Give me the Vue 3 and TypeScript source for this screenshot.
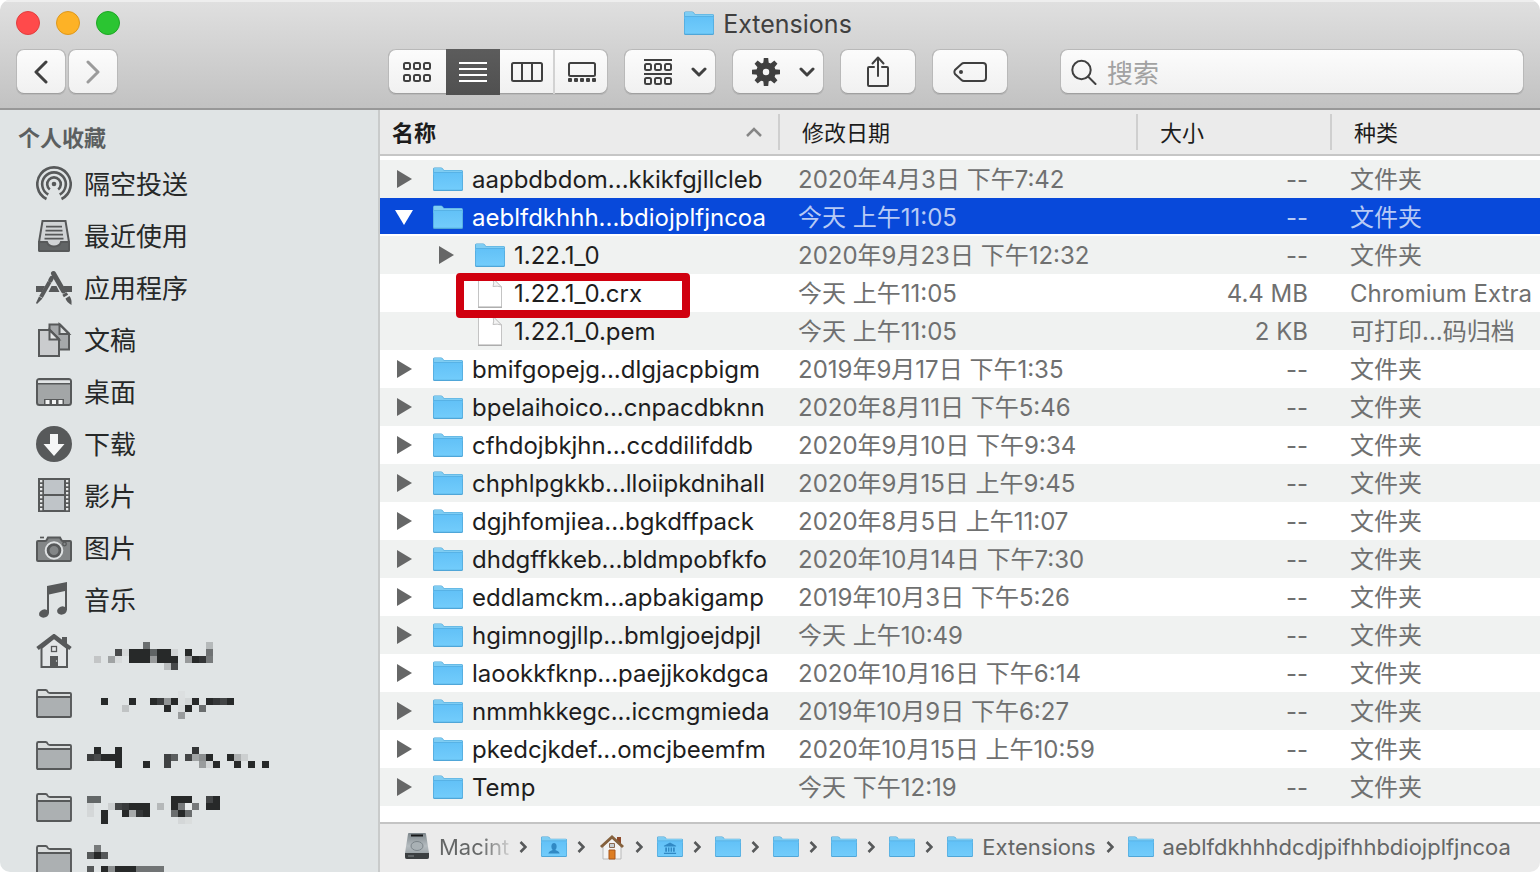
<script setup lang="ts">
import { ref } from 'vue'

type Kind = 'folder' | 'file'
interface Row {
  name: string
  date: string
  size: string
  type: string
  kind: Kind
  depth: number
  open?: boolean
  marked?: boolean
}
type Cell = [row: number, col: number, span: number, shade: string]
interface Place {
  icon: string
  label?: string
  top?: number
  cells?: Cell[]
}

const D = '#272929'

const places: Place[] = [
  { icon: 'airdrop', label: '隔空投送' },
  { icon: 'recents', label: '最近使用' },
  { icon: 'apps', label: '应用程序' },
  { icon: 'docs', label: '文稿' },
  { icon: 'desktop', label: '桌面' },
  { icon: 'downloads', label: '下载' },
  { icon: 'movies', label: '影片' },
  { icon: 'pictures', label: '图片' },
  { icon: 'music', label: '音乐' },
  {
    icon: 'home', top: 16, cells: [
      [0, 8, 1, '#6b6f70'], [0, 17, 1, '#b5b9ba'],
      [1, 4, 1, '#484a4b'], [1, 5, 1, '#d6d9da'], [1, 6, 3, D], [1, 9, 1, '#606465'], [1, 10, 2, D], [1, 12, 1, '#d0d3d4'], [1, 14, 1, D], [1, 17, 1, '#6f7273'],
      [2, 1, 1, '#c3c5c6'], [2, 3, 1, '#a0a3a4'], [2, 4, 1, '#d8dbdc'], [2, 6, 3, D], [2, 9, 1, '#97999a'], [2, 10, 3, D], [2, 14, 1, '#97999a'], [2, 15, 1, D], [2, 16, 1, '#333536'], [2, 17, 1, '#777a7b'],
      [3, 11, 1, '#babdbe'], [3, 12, 1, '#484a4b'],
    ],
  },
  {
    icon: 'folder', top: 13, cells: [
      [0, 13, 1, '#dcdfe0'],
      [1, 2, 1, D], [1, 6, 1, D], [1, 9, 1, D], [1, 10, 1, '#3b3d3e'], [1, 11, 1, '#909394'], [1, 12, 1, D], [1, 13, 1, '#dcdfe0'], [1, 14, 1, '#d3d6d7'], [1, 15, 1, D], [1, 17, 1, D], [1, 18, 1, '#353738'], [1, 19, 1, '#434546'], [1, 20, 1, D],
      [2, 5, 1, '#c0c3c4'], [2, 11, 1, D], [2, 13, 1, '#d9dcdd'], [2, 14, 1, D], [2, 16, 1, '#6a6d6e'],
      [3, 13, 1, '#999c9d'],
    ],
  },
  {
    icon: 'folder', top: 17, cells: [
      [0, 1, 1, D], [0, 4, 1, D], [0, 15, 1, '#333536'],
      [1, 0, 1, '#3b3d3e'], [1, 1, 1, '#484a4b'], [1, 2, 3, D], [1, 11, 1, '#3f4142'], [1, 12, 1, '#5b5e5f'], [1, 14, 1, '#434546'], [1, 15, 1, '#a0a3a4'], [1, 16, 1, '#8b8e8f'], [1, 17, 1, D], [1, 20, 1, D], [1, 21, 1, '#adb0b1'], [1, 22, 1, '#cccfd0'],
      [2, 4, 1, D], [2, 8, 1, D], [2, 11, 1, '#3f4142'], [2, 16, 1, '#999c9d'], [2, 17, 1, '#d3d6d7'], [2, 18, 1, D], [2, 21, 1, D], [2, 23, 1, D], [2, 25, 1, D],
    ],
  },
  {
    icon: 'folder', top: 14, cells: [
      [0, 0, 2, '#636768'], [0, 12, 1, D], [0, 13, 2, D], [0, 17, 1, '#434546'], [0, 18, 1, D],
      [1, 0, 1, '#d2d5d6'], [1, 3, 1, '#cccfd0'], [1, 4, 1, '#434546'], [1, 5, 1, '#383a3b'], [1, 6, 3, D], [1, 10, 1, '#b5b8b9'], [1, 12, 1, D], [1, 13, 1, '#777a7b'], [1, 14, 1, '#eaeded'], [1, 15, 1, '#777a7b'], [1, 17, 2, D],
      [2, 0, 1, '#d4d7d8'], [2, 2, 1, D], [2, 5, 1, D], [2, 6, 1, '#a7aaab'], [2, 7, 1, '#353738'], [2, 8, 1, D], [2, 12, 1, '#6a6d6e'], [2, 13, 1, D], [2, 14, 1, '#6a6d6e'],
      [3, 2, 1, D], [3, 13, 1, '#d4d7d8'], [3, 14, 1, '#dadddd'],
    ],
  },
  {
    icon: 'folder', top: 11, cells: [
      [0, 1, 1, '#777a7b'],
      [1, 0, 1, '#555859'], [1, 1, 1, D], [1, 2, 1, '#555859'],
      [3, 0, 1, '#555859'], [3, 2, 1, D], [3, 3, 1, '#8b8e8f'], [3, 4, 3, D], [3, 7, 4, '#717475'],
    ],
  },
]

const folder = (name: string, date: string, extra: Partial<Row> = {}): Row => ({
  name, date, size: '--', type: '文件夹', kind: 'folder', depth: 0, ...extra,
})

const rows: Row[] = [
  folder('aapbdbdom...kkikfgjllcleb', '2020年4月3日 下午7:42'),
  folder('aeblfdkhhh...bdiojplfjncoa', '今天 上午11:05', { open: true }),
  folder('1.22.1_0', '2020年9月23日 下午12:32', { depth: 1 }),
  { name: '1.22.1_0.crx', date: '今天 上午11:05', size: '4.4 MB', type: 'Chromium Extra', kind: 'file', depth: 1, marked: true },
  { name: '1.22.1_0.pem', date: '今天 上午11:05', size: '2 KB', type: '可打印...码归档', kind: 'file', depth: 1 },
  folder('bmifgopejg...dlgjacpbigm', '2019年9月17日 下午1:35'),
  folder('bpelaihoico...cnpacdbknn', '2020年8月11日 下午5:46'),
  folder('cfhdojbkjhn...ccddilifddb', '2020年9月10日 下午9:34'),
  folder('chphlpgkkb...lloiipkdnihall', '2020年9月15日 上午9:45'),
  folder('dgjhfomjiea...bgkdffpack', '2020年8月5日 上午11:07'),
  folder('dhdgffkkeb...bldmpobfkfo', '2020年10月14日 下午7:30'),
  folder('eddlamckm...apbakigamp', '2019年10月3日 下午5:26'),
  folder('hgimnogjllp...bmlgjoejdpjl', '今天 上午10:49'),
  folder('laookkfknp...paejjkokdgca', '2020年10月16日 下午6:14'),
  folder('nmmhkkegc...iccmgmieda', '2019年10月9日 下午6:27'),
  folder('pkedcjkdef...omcjbeemfm', '2020年10月15日 上午10:59'),
  folder('Temp', '今天 下午12:19'),
]

interface Crumb { icon: 'disk' | 'home' | 'folder'; badge?: 'user' | 'library'; text?: string; fade?: boolean }
const crumbs: Crumb[] = [
  { icon: 'disk', text: 'Macint', fade: true },
  { icon: 'folder', badge: 'user' },
  { icon: 'home' },
  { icon: 'folder', badge: 'library' },
  { icon: 'folder' },
  { icon: 'folder' },
  { icon: 'folder' },
  { icon: 'folder' },
  { icon: 'folder', text: 'Extensions' },
  { icon: 'folder', text: 'aeblfdkhhhdcdjpifhhbdiojplfjncoa' },
]

const selected = ref(1)
const query = ref('')
const holes = [0, 1, 2, 3, 4, 5, 6, 7]
const teeth = [0, 45, 90, 135, 180, 225, 270, 315]
</script>

<template>
  <div class="window">
    <svg class="defs" width="0" height="0" aria-hidden="true">
      <defs>
        <linearGradient id="blue" x1="0" y1="0" x2="0" y2="1">
          <stop offset="0" stop-color="#62c1f7" />
          <stop offset="1" stop-color="#72ccfb" />
        </linearGradient>
        <linearGradient id="metal" x1="0" y1="0" x2="0" y2="1">
          <stop offset="0" stop-color="#7d868b" />
          <stop offset="0.5" stop-color="#b5bcc0" />
          <stop offset="1" stop-color="#8b9397" />
        </linearGradient>
        <symbol id="blue-folder" viewBox="0 0 30 25">
          <path d="M0 2Q0 .5 1.500 .5H8Q9 .5 9.800 1.500L11 3H28.500Q30 3 30 4.500V22.500Q30 24 28.500 24H1.500Q0 24 0 22.500Z" fill="#4fa6d8" />
          <path d="M.7 2Q.7 1 1.700 1H8Q8.800 1 9.400 1.800L10.700 3.500H28.500Q29.300 3.500 29.300 4.500V8H.7Z" fill="#7fcdf3" />
          <path d="M.7 5.500H29.300V22Q29.300 22.700 28.500 22.700H1.500Q.7 22.700 .7 22Z" fill="url(#blue)" />
          <path d="M.7 5.500H29.300" stroke="#57b2e6" stroke-width="1" />
        </symbol>
      </defs>
    </svg>

    <header class="chrome">
      <div class="titlebar">
        <div class="lights">
          <button class="light red" aria-label="关闭"></button>
          <button class="light amber" aria-label="最小化"></button>
          <button class="light green" aria-label="缩放"></button>
        </div>
        <h1 class="title">
          <svg width="30" height="25"><use href="#blue-folder" /></svg>
          <span>Extensions</span>
        </h1>
      </div>

      <div class="toolbar">
        <div class="nav">
          <button class="btn navbtn" aria-label="返回">
            <svg width="14" height="26" fill="none" stroke="#404040" stroke-width="3" stroke-linecap="round" stroke-linejoin="round"><path d="M12 3L2 13L12 23" /></svg>
          </button>
          <button class="btn navbtn" aria-label="前进">
            <svg width="14" height="26" fill="none" stroke="#9b9b9b" stroke-width="3" stroke-linecap="round" stroke-linejoin="round"><path d="M2 3L12 13L2 23" /></svg>
          </button>
        </div>

        <div class="segments">
          <button class="seg first" aria-label="图标">
            <svg width="28" height="22" fill="none" stroke="#404040" stroke-width="2">
              <rect v-for="n in 6" :key="n" :x="1 + ((n - 1) % 3) * 10" :y="n > 3 ? 14 : 2" width="6" height="6" rx="1.500" />
            </svg>
          </button>
          <button class="seg active" aria-label="列表">
            <svg width="28" height="22" stroke="#fff" stroke-width="2"><path d="M0 2H28M0 8H28M0 14H28M0 20H28" /></svg>
          </button>
          <button class="seg" aria-label="分栏">
            <svg width="32" height="22" fill="none" stroke="#404040" stroke-width="2"><rect x="1" y="2" width="30" height="18" rx="1.500" /><path d="M11 2V20M21 2V20" /></svg>
          </button>
          <button class="seg last" aria-label="画廊">
            <svg width="28" height="22">
              <rect x="1" y="2" width="26" height="13" rx="1.500" fill="none" stroke="#404040" stroke-width="2" />
              <rect v-for="n in 5" :key="n" :x="(n - 1) * 6" y="17" width="4" height="4" rx="1" fill="#404040" />
            </svg>
          </button>
        </div>

        <button class="btn menu" aria-label="排列">
          <svg width="28" height="28" fill="none" stroke="#404040" stroke-width="2">
            <path d="M0 2H28M0 16H28" />
            <rect v-for="n in 6" :key="n" :x="1 + ((n - 1) % 3) * 10" :y="n > 3 ? 20 : 6" width="6" height="6" rx="1.500" />
          </svg>
          <svg width="16" height="10" fill="none" stroke="#404040" stroke-width="3" stroke-linecap="round" stroke-linejoin="round"><path d="M2 2L8 8L14 2" /></svg>
        </button>

        <button class="btn menu" aria-label="操作">
          <svg width="28" height="28" viewBox="-14 -14 28 28">
            <path v-for="a in teeth" :key="a" d="M-2.800 -8L-2.200 -14H2.200L2.800 -8Z" fill="#404040" :transform="`rotate(${a})`" />
            <circle r="6.500" fill="none" stroke="#404040" stroke-width="6.500" />
          </svg>
          <svg width="16" height="10" fill="none" stroke="#404040" stroke-width="3" stroke-linecap="round" stroke-linejoin="round"><path d="M2 2L8 8L14 2" /></svg>
        </button>

        <button class="btn tool" aria-label="共享">
          <svg width="24" height="32" fill="none" stroke="#404040" stroke-width="2" stroke-linecap="round" stroke-linejoin="round">
            <path d="M8 11H3Q2 11 2 12V29Q2 30 3 30H21Q22 30 22 29V12Q22 11 21 11H16M12 20V2M6.500 7.500L12 1.500L17.500 7.500" />
          </svg>
        </button>
        <button class="btn tool" aria-label="标签">
          <svg width="34" height="22" fill="none" stroke="#404040" stroke-width="2">
            <path d="M11 2H30Q33 2 33 5V17Q33 20 30 20H11Q9.500 20 8.500 19L2 13Q.8 11 2 9L8.500 3Q9.500 2 11 2Z" />
            <circle cx="8" cy="11" r="2" fill="#404040" stroke="none" />
          </svg>
        </button>

        <label class="search">
          <svg width="26" height="26" fill="none" stroke="#404040" stroke-width="2" stroke-linecap="round"><circle cx="10.500" cy="11" r="9.200" /><path d="M17 17.500L24.500 25" /></svg>
          <input v-model="query" type="text" placeholder="搜索" aria-label="搜索" />
        </label>
      </div>
    </header>

    <div class="body">
      <nav class="sidebar">
        <h2>个人收藏</h2>
        <a v-for="(p, i) in places" :key="i" href="#" class="place" :aria-label="p.label ?? '文件夹'">
          <svg class="glyph" width="36" height="36" fill="none" stroke="#57595a" stroke-width="2">
            <g v-if="p.icon === 'airdrop'" stroke-width="2.600">
              <path d="M10.500 33A16.700 16.700 0 1 1 25.500 33" />
              <path d="M12.300 28.500A11.800 11.800 0 1 1 23.700 28.500" />
              <path d="M13.800 23.500A6.800 6.800 0 1 1 22.200 23.500" />
              <circle cx="18" cy="18" r="2.300" fill="#57595a" stroke="none" />
            </g>
            <g v-else-if="p.icon === 'recents'">
              <path d="M6.500 3H29.500L33 24V32Q33 33 32 33H4Q3 33 3 32V24Z" fill="#d0d3d5" />
              <path d="M3 24H11Q12.500 28.500 18 28.500T25 24H33V32Q33 33 32 33H4Q3 33 3 32Z" fill="#626566" />
              <path d="M10 8.700H26M9.500 12.700H26.500M9 16.700H27M8.500 20.700H27.500" stroke-width="1.700" />
            </g>
            <g v-else-if="p.icon === 'apps'">
              <path d="M0 16H9L6 22H0ZM15.500 16H20.500L23.500 22H12.500ZM27 16H36V22H30Z" fill="#57595a" stroke="none" />
              <path d="M13.500 12L5 27" stroke-width="4" />
              <path d="M15.700 8L14.400 10.300" stroke-width="4.500" stroke-linecap="round" />
              <path d="M3 26.500L6.500 28.500L1 34L0 33Z" fill="#57595a" stroke="none" />
              <path d="M17.500 3.500L27.500 21" stroke-width="5" stroke-linecap="round" />
              <path d="M28.500 23.500L30 26" stroke-width="5" />
              <path d="M29.500 28.500L33.500 26Q36 29 35.500 35Q30.500 32 29.500 28.500Z" fill="#57595a" stroke="none" />
            </g>
            <g v-else-if="p.icon === 'docs'">
              <path d="M13.500 2.500H24L33 11.500V27.500H13.500Z" fill="#a5a8aa" />
              <path d="M23.500 2.500V12H33Z" fill="#dde0e1" />
              <path d="M3 8H14L23 17V34H3Z" fill="#caccce" />
              <path d="M13.500 8V17.500H23Z" fill="#e4e6e7" />
            </g>
            <g v-else-if="p.icon === 'desktop'">
              <rect x="1" y="5" width="34" height="26" rx="2.500" fill="#a3a6a7" />
              <path d="M2 6.500H34V9.500H2Z" fill="#e2e5e6" stroke="none" />
              <path d="M1 9.800H35" stroke-width="1.600" />
              <path d="M8 31V25H28V31Z" fill="#57595a" stroke="none" />
              <path d="M9.500 26H13.500V30H9.500ZM16 26H20V30H16ZM22.500 26H26.500V30H22.500Z" fill="#f3f4f4" stroke="none" />
            </g>
            <g v-else-if="p.icon === 'downloads'" stroke="none">
              <circle cx="18" cy="18" r="18" fill="#57595a" />
              <path d="M14 8H22V18H28.500L18 30L7.500 18H14Z" fill="#f6f7f7" />
            </g>
            <g v-else-if="p.icon === 'movies'" stroke="none">
              <path d="M2 0H34V34H2Z" fill="#57595a" />
              <path d="M8 2H28V16H8ZM8 18H28V32H8Z" fill="#bfc4c8" />
              <template v-for="h in holes" :key="h">
                <rect x="4" :y="2 + h * 4" width="2.300" height="2.300" fill="#e6e8e9" />
                <rect x="30" :y="2 + h * 4" width="2.300" height="2.300" fill="#e6e8e9" />
              </template>
            </g>
            <g v-else-if="p.icon === 'pictures'">
              <path d="M4 7.500H8" stroke-width="1.700" />
              <path d="M2 11H9Q10.500 11 11 9.500L12 7.500H24L25 9.500Q25.500 11 27 11H34Q35 11 35 12V30Q35 31 34 31H2Q1 31 1 30V12Q1 11 2 11Z" fill="#838687" />
              <circle cx="18" cy="20.500" r="8.300" stroke="#dfe2e3" stroke-width="2" fill="#57595a" />
              <circle cx="18" cy="20.500" r="5.500" fill="#838687" />
              <circle cx="28.500" cy="14" r="1.800" stroke-width="1.300" />
            </g>
            <g v-else-if="p.icon === 'music'" stroke="none" fill="#57595a">
              <path d="M11 4L31 0V28H29V9L13 12.500V31H11Z" />
              <ellipse cx="8" cy="31.500" rx="5" ry="4" transform="rotate(-20 8 31.500)" />
              <ellipse cx="26" cy="28.500" rx="5" ry="4" transform="rotate(-20 26 28.500)" />
            </g>
            <g v-else-if="p.icon === 'home'">
              <path d="M26 3H31V13L26 9Z" fill="#57595a" stroke="none" />
              <path d="M5.500 14L18 4L31 14V33H5.500Z" fill="#e3e6e7" />
              <path d="M1.500 14.500L18 2L34.500 14.500" stroke-width="4" />
              <rect x="15.500" y="12.500" width="5" height="5" stroke-width="1.300" />
              <path d="M14 22H22V33H14Z" fill="#57595a" stroke="none" />
              <circle cx="20.500" cy="27" r=".7" fill="#e3e6e7" stroke="none" />
            </g>
            <g v-else>
              <path d="M1 5.500Q1 4 2.500 4H9.500Q11 4 11.500 5.500Q12 7 14 7H34Q35 7 35 8V31H1Z" fill="#dadddd" stroke="none" />
              <path d="M1 11H35V31H1Z" fill="#acb0b2" stroke="none" />
              <path d="M1 11H35M2.500 4H9.500Q11 4 11.500 5.500Q12 7 14 7H34Q35 7 35 8V30Q35 31 34 31H2Q1 31 1 30V5.500Q1 4 2.500 4Z" stroke-width="1.900" />
            </g>
          </svg>
          <span v-if="p.label">{{ p.label }}</span>
          <svg v-else class="mosaic" width="190" height="52" shape-rendering="crispEdges">
            <rect v-for="(c, k) in p.cells" :key="k" :x="3 + c[1] * 7" :y="(p.top ?? 0) + c[0] * 7" :width="c[2] * 7" height="7" :fill="c[3]" />
          </svg>
        </a>
      </nav>

      <main class="content">
        <div class="list">
          <table>
            <colgroup>
              <col class="c-name" /><col class="c-date" /><col class="c-size" /><col />
            </colgroup>
            <thead>
              <tr>
                <th scope="col" class="sorted" aria-sort="ascending">
                  <div class="head">
                    <span>名称</span>
                    <svg width="16" height="10" fill="none" stroke="#868686" stroke-width="2.500"><path d="M1 9L8 2L15 9" /></svg>
                  </div>
                </th>
                <th scope="col"><div class="head"><span>修改日期</span></div></th>
                <th scope="col"><div class="head"><span>大小</span></div></th>
                <th scope="col"><div class="head"><span>种类</span></div></th>
              </tr>
            </thead>
            <tbody>
              <tr v-for="(r, i) in rows" :key="r.name" :class="{ selected: i === selected }" @click="selected = i">
                <td class="name">
                  <div class="entry" :class="{ nested: r.depth }">
                    <button v-if="r.kind === 'folder'" class="twist" :aria-label="r.open ? '收起' : '展开'">
                      <svg v-if="r.open" width="18" height="18" fill="currentColor"><path d="M0 2H18L9 17Z" /></svg>
                      <svg v-else width="18" height="18" fill="currentColor"><path d="M2 0V18L17 9Z" /></svg>
                    </button>
                    <span v-else class="twist"></span>
                    <svg v-if="r.kind === 'folder'" class="icon" width="30" height="25"><use href="#blue-folder" /></svg>
                    <svg v-else class="icon" width="30" height="30">
                      <path d="M3.500 .5H18L26.500 9V29H3.500Z" fill="#fff" stroke="#c4c4c4" />
                      <path d="M3 29.300H27" stroke="#a2a2a2" />
                      <path d="M18 .5Q19.500 5.500 18 8.500Q22 7.500 26.500 9Z" fill="#f4f4f4" stroke="#c0c0c0" />
                    </svg>
                    <span class="label">{{ r.name }}</span>
                  </div>
                  <span v-if="r.marked" class="marker"></span>
                </td>
                <td class="date">{{ r.date }}</td>
                <td class="size">{{ r.size }}</td>
                <td class="type">{{ r.type }}</td>
              </tr>
            </tbody>
          </table>
        </div>

        <footer class="pathbar">
          <template v-for="(c, i) in crumbs" :key="i">
            <svg v-if="i" class="sep" width="8" height="12" fill="none" stroke="#57595a" stroke-width="2.600"><path d="M1.500 1L6.500 6L1.500 11" /></svg>
            <a href="#" class="crumb" :aria-label="c.text ?? '文件夹'">
              <svg v-if="c.icon === 'disk'" width="26" height="28">
                <path d="M4 1Q4 0 5 0H21Q22 0 22 1L25 20V24Q25 26 23 26H3Q1 26 1 24V20Z" fill="url(#metal)" />
                <path d="M1 20H25V24Q25 26 23 26H3Q1 26 1 24Z" fill="#3b3f41" />
                <path d="M7 2.500H19" stroke="#17191a" stroke-width="2" />
                <ellipse cx="13" cy="13" rx="6" ry="4.500" fill="#a9b1b5" stroke="#7b8489" />
                <path d="M4 23H10" stroke="#84898c" />
              </svg>
              <svg v-else-if="c.icon === 'home'" width="26" height="26">
                <path d="M18 3H22V10H18Z" fill="#8f4a2a" />
                <path d="M4 12L13 4L22 12V25H4Z" fill="#f3f3f3" stroke="#b9b9b9" />
                <path d="M2 13L13 3L24 13" fill="none" stroke="#85613d" stroke-width="3" />
                <path d="M10.500 9.500H15.500V13.500H10.500Z" fill="#c7cdd1" stroke="#8a6a52" />
                <path d="M10 16H16V25H10Z" fill="#dd7d22" stroke="#a8561a" />
              </svg>
              <svg v-else width="26" height="22" viewBox="0 0 30 25" preserveAspectRatio="none">
                <use href="#blue-folder" width="30" height="25" />
                <g v-if="c.badge === 'user'" fill="#3189c4">
                  <ellipse cx="15" cy="12" rx="3" ry="4" />
                  <path d="M8.500 20Q9 17.500 13.500 16V14H16.500V16Q21 17.500 21.500 20Z" />
                </g>
                <g v-if="c.badge === 'library'" fill="#3189c4">
                  <path d="M8 11L15 7.500L22 11V12H8ZM9.500 13H11.500V18H9.500ZM12.700 13H14.300V18H12.700ZM15.700 13H17.300V18H15.700ZM18.500 13H20.500V18H18.500ZM8 19H22V20.500H8Z" />
                </g>
              </svg>
              <span v-if="c.text" :class="{ fade: c.fade }">{{ c.text }}</span>
            </a>
          </template>
        </footer>
      </main>
    </div>
  </div>
</template>

<style>
html,
body {
  background: #fff;
}
</style>

<style scoped>
.window {
  position: relative;
  display: flex;
  flex-direction: column;
  height: 100vh;
  overflow: hidden;
  border-radius: 10px;
  font-family: Inter, "Noto Sans CJK SC", sans-serif;
  color: #262626;
  background: #fff;
}
.window * {
  box-sizing: border-box;
}
.defs {
  position: absolute;
}
svg {
  display: block;
  flex: none;
}
button {
  padding: 0;
  border: 0;
  background: none;
  font: inherit;
}
a {
  color: inherit;
  text-decoration: none;
}

.chrome {
  flex: none;
  height: 110px;
  background: linear-gradient(#e0e0e0, #c2c2c2);
  border-bottom: 2px solid #989898;
  box-shadow: inset 0 2px 0 #eeeeee;
}
.titlebar {
  display: grid;
  grid-template-columns: 1fr auto 1fr;
  align-items: center;
  height: 44px;
  padding: 0 20px 0 16px;
}
.lights {
  display: flex;
  gap: 16px;
}
.light {
  width: 24px;
  height: 24px;
  border-radius: 50%;
}
.red {
  background: #ff4a4b;
  border: 1px solid #e23e3e;
}
.amber {
  background: #fdb226;
  border: 1px solid #de981c;
}
.green {
  background: #2bc532;
  border: 1px solid #1ea725;
}
.title {
  display: flex;
  align-items: center;
  gap: 9px;
  margin: 0;
  font-size: 25px;
  line-height: 44px;
  font-weight: 400;
  color: #404040;
}
.title span {
  padding-top: 2px;
}
.toolbar {
  display: flex;
  align-items: center;
  gap: 16px;
  padding: 5px 16px 0;
}
.nav {
  display: flex;
  flex: none;
  gap: 2px;
  width: 356px;
}
.btn,
.segments,
.search {
  display: flex;
  flex: none;
  align-items: center;
  justify-content: center;
  height: 46px;
  border-radius: 8px;
  background: linear-gradient(#fcfcfc, #f0f0f0);
  box-shadow: inset 0 0 0 1px #b9b9b9, inset 0 -1px 0 1px #a0a0a0;
}
.navbtn {
  width: 50px;
}
.segments {
  width: 220px;
}
.seg {
  display: flex;
  flex: 1;
  align-items: center;
  justify-content: center;
  height: 44px;
}
.seg.first {
  flex: 0 0 58px;
}
.seg.active {
  flex: 0 0 54px;
  height: 46px;
  background: linear-gradient(#5c5c5c, #505050);
}
.seg.last {
  border-left: 2px solid #d2d2d2;
}
.menu {
  width: 92px;
  gap: 19px;
  padding-left: 10px;
}
.tool {
  width: 76px;
}
.search {
  flex: 1;
  min-width: 0;
  margin-left: 36px;
  padding: 0 11px;
  gap: 10px;
}
.search input {
  flex: 1;
  min-width: 0;
  height: 40px;
  padding: 2px 0 0;
  border: 0;
  outline: 0;
  background: none;
  font: inherit;
  font-size: 26px;
  color: #262626;
}
.search input::placeholder {
  color: #a2a2a2;
  opacity: 1;
}

.body {
  display: flex;
  flex: 1;
  min-height: 0;
}
.sidebar {
  flex: 0 0 380px;
  overflow: hidden;
  background: #e0e4e5;
  border-right: 2px solid #c9cbcb;
}
.sidebar h2 {
  margin: 0;
  padding: 4px 0 0 18px;
  height: 48px;
  font-size: 22px;
  line-height: 48px;
  font-weight: 700;
  color: #5c5f60;
}
.place {
  display: flex;
  align-items: center;
  gap: 12px;
  height: 52px;
  padding-left: 36px;
  font-size: 26px;
  line-height: 50px;
  color: #262828;
}
.place span {
  padding-top: 2px;
}

.content {
  display: flex;
  flex: 1;
  flex-direction: column;
  min-width: 0;
}
.list {
  flex: 1;
  min-height: 0;
  overflow: hidden;
}
table {
  width: 100%;
  table-layout: fixed;
  border-collapse: separate;
  border-spacing: 0;
}
.c-name {
  width: 400px;
}
.c-date {
  width: 358px;
}
.c-size {
  width: 194px;
}
th {
  height: 46px;
  padding: 0;
  background: #ebebeb;
  border-bottom: 2px solid #c6c6c6;
  font-size: 22px;
  font-weight: 400;
  text-align: left;
  color: #1c1c1c;
}
th.sorted {
  font-weight: 700;
}
.head {
  display: flex;
  align-items: center;
  justify-content: space-between;
  height: 36px;
  padding: 0 16px 0 22px;
  border-right: 2px solid #cfcfcf;
}
.head span {
  padding-bottom: 3px;
}
.sorted .head {
  padding-left: 12px;
}
th:last-child .head {
  border-right: 0;
}
tbody::before {
  content: "";
  display: block;
  height: 4px;
}
td {
  height: 38px;
  padding: 2px 0 0;
  font-size: 24px;
  line-height: 36px;
  white-space: nowrap;
  color: #6f7070;
  background: #fff;
}
tr:nth-child(odd) td {
  background: #f0f2f1;
}
tr.selected td {
  background: linear-gradient(#0849da 36px, #fff 36px);
  color: #b7caf5;
}
td.name {
  position: relative;
  padding: 0;
  color: #1e1e1e;
}
tr.selected td.name {
  color: #fff;
}
.entry {
  display: flex;
  align-items: center;
  height: 38px;
  padding-left: 15px;
}
.entry.nested {
  padding-left: 57px;
}
.label {
  padding-top: 2px;
}
.twist {
  width: 18px;
  color: #666767;
}
.selected .twist {
  color: #fff;
}
.icon {
  margin: 0 9px 0 20px;
}
.marker {
  position: absolute;
  z-index: 1;
  left: 76px;
  top: -1px;
  width: 234px;
  height: 45px;
  border: 8px solid #d0000f;
  border-radius: 4px;
  pointer-events: none;
}
td.date {
  padding-left: 18px;
}
td.size {
  padding-right: 24px;
  text-align: right;
}
td.type {
  padding-left: 18px;
}

.pathbar {
  display: flex;
  flex: none;
  align-items: center;
  height: 50px;
  padding: 0 24px 2px;
  background: #ebebeb;
  border-top: 2px solid #c4c4c4;
  font-size: 22px;
  line-height: 46px;
  color: #646666;
  white-space: nowrap;
}
.crumb {
  display: flex;
  align-items: center;
  gap: 9px;
}
.sep {
  margin: 0 14px 0 10px;
}
.fade {
  background: linear-gradient(90deg, #646666 60%, #d0d0d0);
  background-clip: text;
  color: transparent;
}
</style>
